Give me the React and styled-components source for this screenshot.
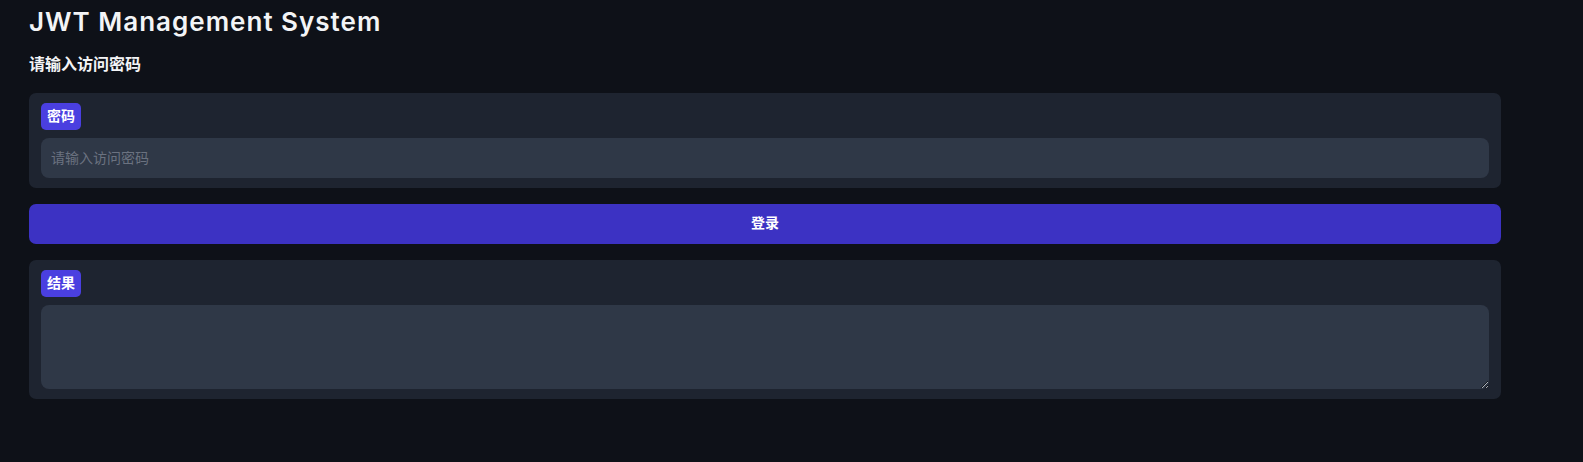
import React, { useState } from "react";
import styled, { createGlobalStyle } from "styled-components";

const GlobalStyle = createGlobalStyle`
  html, body {
    margin: 0;
    padding: 0;
    background: #0e1118;
    font-family: Inter, "Noto Sans CJK SC", sans-serif;
    color: #f3f4f6;
  }
`;

const Page = styled.div`
  width: 1472px;
  padding: 6px 29px 20px 29px;
`;

const Title = styled.h1`
  margin: 0;
  font-family: Inter, sans-serif;
  font-size: 26px;
  line-height: 32px;
  font-weight: 600;
  letter-spacing: 1px;
  color: #f3f4f6;
`;

const SubTitle = styled.h2`
  margin: 14px 0 17px 0;
  font-size: 16px;
  line-height: 24px;
  font-weight: 700;
  color: #f3f4f6;
`;

const Stack = styled.div`
  display: flex;
  flex-direction: column;
  gap: 16px;
`;

const Card = styled.div`
  background: #1e2430;
  border-radius: 7px;
  padding: 10px 12px;
  display: flex;
  flex-direction: column;
  align-items: flex-start;
  gap: 8px;
`;

const Badge = styled.span`
  display: inline-block;
  background: #4a3fe0;
  color: #ffffff;
  font-size: 14px;
  line-height: 19px;
  font-weight: 700;
  padding: 3px 6px 5px 6px;
  border-radius: 5px;
`;

const fieldStyles = `
  width: 100%;
  box-sizing: border-box;
  background: #2f3847;
  border: none;
  outline: none;
  border-radius: 8px;
  color: #e5e7eb;
  font-family: Inter, "Noto Sans CJK SC", sans-serif;
  font-size: 14px;
  padding: 0 10px;
  &::placeholder {
    color: #6b7280;
  }
`;

const Input = styled.input`
  ${fieldStyles}
  height: 40px;
  padding-bottom: 2px;
`;

const TextArea = styled.textarea`
  ${fieldStyles}
  height: 84px;
  padding: 8px 10px;
  resize: vertical;
  display: block;
`;

const Button = styled.button`
  height: 40px;
  width: 100%;
  border: none;
  border-radius: 7px;
  background: #3c32c3;
  color: #ffffff;
  font-family: Inter, "Noto Sans CJK SC", sans-serif;
  font-size: 14px;
  font-weight: 700;
  padding: 0 0 4px 0;
  cursor: pointer;
`;

const App = () => {
  const [password, setPassword] = useState("");
  const [result, setResult] = useState("");
  return (
    <>
      <GlobalStyle />
      <Page>
        <Title>JWT Management System</Title>
        <SubTitle>请输入访问密码</SubTitle>
        <Stack>
          <Card>
            <Badge>密码</Badge>
            <Input
              type="password"
              placeholder="请输入访问密码"
              value={password}
              onChange={(e) => setPassword(e.target.value)}
            />
          </Card>
          <Button onClick={() => setResult("")}>登录</Button>
          <Card>
            <Badge>结果</Badge>
            <TextArea value={result} onChange={(e) => setResult(e.target.value)} />
          </Card>
        </Stack>
      </Page>
    </>
  );
};

export default App;
